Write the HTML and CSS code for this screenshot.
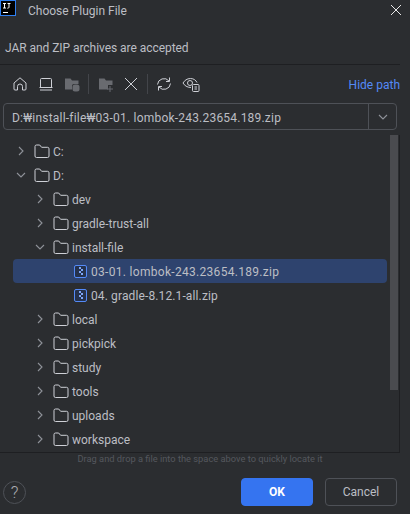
FILE: index.html
```html
<!DOCTYPE html>
<html lang="en">
<head>
<meta charset="utf-8">
<title>Choose Plugin File</title>
<link rel="stylesheet" href="styles.css">
</head>
<body>
<svg class="sprites" width="0" height="0" aria-hidden="true">
  <symbol id="folder" viewBox="0 0 16 14"><path d="M1 3V12a1.500 1.500 0 0 0 1.500 1.500H13.500a1.500 1.500 0 0 0 1.500-1.500V4.800a1.500 1.500 0 0 0-1.500-1.500H7.600L5.700 1H2.500A1.500 1.500 0 0 0 1 2.500Z" fill="none" stroke="#ced0d6" stroke-width="1"/></symbol>
  <symbol id="right" viewBox="0 0 10 12"><path d="M3 2 7 6 3 10" fill="none" stroke="#8f9299" stroke-width="1.100"/></symbol>
  <symbol id="down" viewBox="0 0 10 12"><path d="M1 4 5 8 9 4" fill="none" stroke="#8f9299" stroke-width="1.100"/></symbol>
  <symbol id="zip" viewBox="0 0 13 13"><rect x=".5" y=".5" width="12" height="12" rx="1.500" fill="#25324d" stroke="#548af7"/><path d="M5 2h2v2H5zM7 4h2v2H7zM5 6h2v2H5zM7 8h2v2H7z" fill="#7ea6f7"/></symbol>
</svg>
<main class="dialog">
  <header class="titlebar">
    <svg class="logo" width="17" height="17" viewBox="0 0 17 17"><rect x=".5" y=".5" width="15" height="15" fill="#000" stroke="#2f7ff0"/><path d="M3 3.500h3M4.500 3.500v4.500M3 8h3M7.500 3.500h3M9 3.500v3.800q0 1-1.700.9M3 12.500h5" fill="none" stroke="#fff"/></svg>
    <span class="title">Choose Plugin File</span>
    <svg class="close" width="12" height="12" viewBox="0 0 12 12"><path d="M1 1l10 10M11 1 1 11" stroke="#e8e8e8" stroke-width="1"/></svg>
  </header>
  <p class="desc">JAR and ZIP archives are accepted</p>
  <div class="toolbar">
    <div class="tools">
      <svg class="tool" width="16" height="16" viewBox="0 0 16 16"><path d="M2 7 8 1.800 14 7V13a1 1 0 0 1-1 1H10.500V10.500a2.500 2.500 0 0 0-5 0V14H3a1 1 0 0 1-1-1Z" fill="none" stroke="#ced0d6"/></svg>
      <svg class="tool" width="16" height="16" viewBox="0 0 16 16"><path d="M2.500 11.500V3.500a1 1 0 0 1 1-1h9a1 1 0 0 1 1 1v8M1.500 11.500h13M2 14h12" fill="none" stroke="#ced0d6"/></svg>
      <svg class="tool" width="16" height="16" viewBox="0 0 16 16"><path d="M1 2.500h5.500L8 4.500h6.500V8H10a2 2 0 0 0-2 2v3.500H1Z" fill="#696b70"/><rect x="8.500" y="8.500" width="7" height="7" rx="2.500" fill="#696b70"/></svg>
      <span class="sep"></span>
      <svg class="tool" width="16" height="16" viewBox="-1 0 16 16"><path d="M1 2.500h5.500L8 4.500h6.500V9H10v4.500H1Z" fill="#696b70"/><path d="M12 10v6M9 13h6" stroke="#696b70"/></svg>
      <svg class="tool" width="16" height="16" viewBox="0 0 16 16"><path d="M2 2l12 12M14 2 2 14" stroke="#ced0d6"/></svg>
      <span class="sep"></span>
      <svg class="tool" width="16" height="16" viewBox="0 0 16 16"><path d="M1.500 8.500a6.500 6.500 0 0 1 11.500-3.500M14.500 7.500a6.500 6.500 0 0 1-11.500 3.500M13.500 1.500v4H10M2.500 14.500v-4H6" fill="none" stroke="#ced0d6"/></svg>
      <svg class="tool" width="18" height="16" viewBox="0 0 18 16"><path d="M9 11.500C5 11.500 2.500 9.500 1 7c1.500-2.500 4-4.500 7.500-4.500S14 4.500 15 6.500" fill="none" stroke="#ced0d6"/><circle cx="8" cy="7" r="2.500" fill="none" stroke="#ced0d6"/><rect x="10.500" y="8.500" width="6.500" height="7" rx="1" fill="#2b2d30" stroke="#ced0d6"/><path d="M12.500 11h2.500M12.500 13h2.500" stroke="#ced0d6"/></svg>
    </div>
    <a class="hide-path">Hide path</a>
  </div>
  <div class="pathbox">
    <span class="path">D:₩install-file₩03-01. lombok-243.23654.189.zip</span>
    <span class="drop"><svg width="10" height="12"><use href="#down"/></svg></span>
  </div>
  <div class="tree">
    <ul class="rows">
      <li class="row l0"><svg class="chev" width="10" height="12"><use href="#right"/></svg><svg class="fold" width="16" height="14"><use href="#folder"/></svg><span>C:</span></li>
      <li class="row l0"><svg class="chev" width="10" height="12"><use href="#down"/></svg><svg class="fold" width="16" height="14"><use href="#folder"/></svg><span>D:</span></li>
      <li class="row l1"><svg class="chev" width="10" height="12"><use href="#right"/></svg><svg class="fold" width="16" height="14"><use href="#folder"/></svg><span>dev</span></li>
      <li class="row l1"><svg class="chev" width="10" height="12"><use href="#right"/></svg><svg class="fold" width="16" height="14"><use href="#folder"/></svg><span>gradle-trust-all</span></li>
      <li class="row l1"><svg class="chev" width="10" height="12"><use href="#down"/></svg><svg class="fold" width="16" height="14"><use href="#folder"/></svg><span>install-file</span></li>
      <li class="row l2 selected"><svg class="file" width="13" height="13"><use href="#zip"/></svg><span>03-01. lombok-243.23654.189.zip</span></li>
      <li class="row l2"><svg class="file" width="13" height="13"><use href="#zip"/></svg><span>04. gradle-8.12.1-all.zip</span></li>
      <li class="row l1"><svg class="chev" width="10" height="12"><use href="#right"/></svg><svg class="fold" width="16" height="14"><use href="#folder"/></svg><span>local</span></li>
      <li class="row l1"><svg class="chev" width="10" height="12"><use href="#right"/></svg><svg class="fold" width="16" height="14"><use href="#folder"/></svg><span>pickpick</span></li>
      <li class="row l1"><svg class="chev" width="10" height="12"><use href="#right"/></svg><svg class="fold" width="16" height="14"><use href="#folder"/></svg><span>study</span></li>
      <li class="row l1"><svg class="chev" width="10" height="12"><use href="#right"/></svg><svg class="fold" width="16" height="14"><use href="#folder"/></svg><span>tools</span></li>
      <li class="row l1"><svg class="chev" width="10" height="12"><use href="#right"/></svg><svg class="fold" width="16" height="14"><use href="#folder"/></svg><span>uploads</span></li>
      <li class="row l1"><svg class="chev" width="10" height="12"><use href="#right"/></svg><svg class="fold" width="16" height="14"><use href="#folder"/></svg><span>workspace</span></li>
    </ul>
    <div class="scrollbar"></div>
  </div>
  <p class="hint">Drag and drop a file into the space above to quickly locate it</p>
  <footer class="footer">
    <span class="help">?</span>
    <div class="actions">
      <button class="btn primary">OK</button>
      <button class="btn">Cancel</button>
    </div>
  </footer>
</main>
</body>
</html>
```
FILE: styles.css
```css
* { box-sizing: border-box; }
html, body { margin: 0; padding: 0; }
body {
  width: 410px;
  height: 514px;
  overflow: hidden;
  background: #2b2d30;
  color: #bcbec4;
  font-family: Roboto, "Noto Sans CJK KR", sans-serif;
  font-size: 12px;
}
.sprites { position: absolute; }
.dialog { display: flex; flex-direction: column; height: 514px; }
.titlebar {
  display: flex;
  align-items: flex-start;
  height: 36px;
  flex: none;
}
.logo { flex: none; }
.title { margin-left: 11px; margin-top: 2px; line-height: 18px; }
.close { margin-left: auto; margin-right: 8px; margin-top: 4px; }
.desc {
  margin: 0 10px 0 0;
  padding-left: 5px;
  height: 29px;
  line-height: 24px;
  letter-spacing: -.05px;
  border-bottom: 1px solid #1e1f22;
  flex: none;
}
.toolbar {
  display: flex;
  align-items: center;
  justify-content: space-between;
  height: 38px;
  padding: 0 10px 0 12px;
  flex: none;
}
.tools { display: flex; align-items: center; gap: 10px; }
.tool { flex: none; }
.sep { width: 1px; height: 20px; margin: 0 -2px; background: #43454a; }
.hide-path { padding-top: 2px; color: #548af7; }
.pathbox {
  display: flex;
  align-items: center;
  height: 27px;
  margin: 0 13px 0 3px;
  border: 1px solid #4e5157;
  border-radius: 4px;
  flex: none;
}
.path { flex: 1; padding: 2px 0 0 8px; white-space: nowrap; letter-spacing: .21px; }
.drop {
  display: flex;
  align-items: center;
  justify-content: center;
  width: 28px;
  height: 100%;
  border-left: 1px solid #4e5157;
}
.tree {
  position: relative;
  height: 318px;
  margin: 5px 10px 0 0;
  border: 1px solid #1e1f22;
  border-top: 0;
  border-left: 0;
  flex: none;
}
.rows { list-style: none; margin: 0; padding: 4px 0 0; }
.row {
  display: flex;
  align-items: center;
  height: 24px;
  margin: 0 12px 0 13px;
  border-radius: 4px;
  white-space: nowrap;
}
.row span { padding-top: 2px; }
.chev, .fold, .file { flex: none; }
.row.l0 { padding-left: 3px; }
.row.l1 { padding-left: 22px; }
.row.l2 { padding-left: 61px; letter-spacing: .12px; }
.row .chev { margin-right: 8px; }
.row .fold { margin-right: 3px; }
.row .file { margin-right: 4px; }
.selected { background: #2e436e; }
.row.selected { letter-spacing: .3px; }
.scrollbar {
  position: absolute;
  top: 0;
  right: 1px;
  width: 8px;
  height: 255px;
  background: #4a4b4f;
}
.hint {
  margin: 0;
  padding-right: 10px;
  height: 14px;
  line-height: 12px;
  text-align: center;
  font-size: 9.3px;
  color: #55585e;
  flex: none;
}
.footer {
  display: flex;
  align-items: center;
  justify-content: space-between;
  padding: 11px 13px 0 3px;
}
.help {
  display: flex;
  align-items: center;
  justify-content: center;
  width: 23px;
  height: 23px;
  border: 1px solid #4e5157;
  border-radius: 50%;
  font-size: 17px;
  font-weight: 300;
  color: #a9abb1;
}
.actions { display: flex; gap: 12px; }
.btn {
  width: 72px;
  height: 28px;
  padding: 0;
  border: 1px solid #4e5157;
  border-radius: 4px;
  background: transparent;
  color: #bcbec4;
  font: inherit;
}
.btn.primary {
  border-color: #3574f0;
  background: #3574f0;
  color: #fff;
  font-weight: 700;
}
```
